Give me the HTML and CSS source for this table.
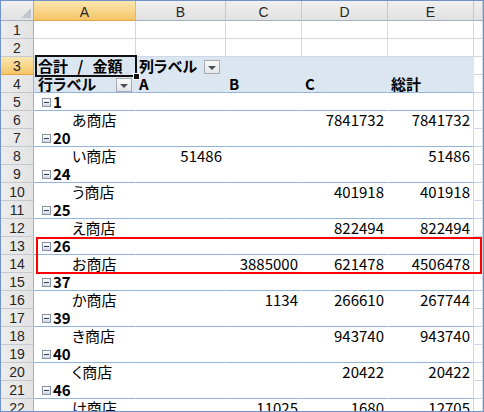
FILE: index.html
```html
<!DOCTYPE html>
<html lang="ja">
<head>
<meta charset="utf-8">
<title>ピボットテーブル</title>
<link rel="stylesheet" href="styles.css">
</head>
<body>
<div class="sheet">
  <div class="row head">
    <div class="ch corner"><span class="tri"></span></div>
    <div class="ch sel">A</div>
    <div class="ch">B</div>
    <div class="ch">C</div>
    <div class="ch">D</div>
    <div class="ch">E</div>
    <div class="ch"></div>
  </div>
  <div class="row"><div class="rh">1</div><div class="c"></div><div class="c"></div><div class="c"></div><div class="c"></div><div class="c"></div><div class="c"></div></div>
  <div class="row"><div class="rh">2</div><div class="c"></div><div class="c"></div><div class="c"></div><div class="c"></div><div class="c"></div><div class="c"></div></div>
  <div class="row">
    <div class="rh sel">3</div>
    <div class="c ph first"><span class="sum">合計 / 金額</span></div>
    <div class="c ph split"><span>列ラベル</span><span class="dd b3"></span></div>
    <div class="c ph"></div><div class="c ph"></div><div class="c ph"></div>
    <div class="c"></div>
  </div>
  <div class="row">
    <div class="rh">4</div>
    <div class="c ph line first split"><span>行ラベル</span><span class="dd a4"></span></div>
    <div class="c ph line">A</div>
    <div class="c ph line">B</div>
    <div class="c ph line">C</div>
    <div class="c ph line">総計</div>
    <div class="c"></div>
  </div>

  <div class="row"><div class="rh">5</div><div class="c pb line grp"><span class="tog"></span>1</div><div class="c pb line"></div><div class="c pb line"></div><div class="c pb line"></div><div class="c pb line last"></div><div class="c"></div></div>
  <div class="row"><div class="rh">6</div><div class="c pb item">あ商店</div><div class="c pb num"></div><div class="c pb num"></div><div class="c pb num">7841732</div><div class="c pb num last">7841732</div><div class="c"></div></div>

  <div class="row"><div class="rh">7</div><div class="c pb line grp"><span class="tog"></span>20</div><div class="c pb line"></div><div class="c pb line"></div><div class="c pb line"></div><div class="c pb line last"></div><div class="c"></div></div>
  <div class="row"><div class="rh">8</div><div class="c pb item">い商店</div><div class="c pb num">51486</div><div class="c pb num"></div><div class="c pb num"></div><div class="c pb num last">51486</div><div class="c"></div></div>

  <div class="row"><div class="rh">9</div><div class="c pb line grp"><span class="tog"></span>24</div><div class="c pb line"></div><div class="c pb line"></div><div class="c pb line"></div><div class="c pb line last"></div><div class="c"></div></div>
  <div class="row"><div class="rh">10</div><div class="c pb item">う商店</div><div class="c pb num"></div><div class="c pb num"></div><div class="c pb num">401918</div><div class="c pb num last">401918</div><div class="c"></div></div>

  <div class="row"><div class="rh">11</div><div class="c pb line grp"><span class="tog"></span>25</div><div class="c pb line"></div><div class="c pb line"></div><div class="c pb line"></div><div class="c pb line last"></div><div class="c"></div></div>
  <div class="row"><div class="rh">12</div><div class="c pb item">え商店</div><div class="c pb num"></div><div class="c pb num"></div><div class="c pb num">822494</div><div class="c pb num last">822494</div><div class="c"></div></div>

  <div class="row"><div class="rh">13</div><div class="c pb line grp"><span class="tog"></span>26</div><div class="c pb line"></div><div class="c pb line"></div><div class="c pb line"></div><div class="c pb line last"></div><div class="c"></div></div>
  <div class="row"><div class="rh">14</div><div class="c pb item">お商店</div><div class="c pb num"></div><div class="c pb num">3885000</div><div class="c pb num">621478</div><div class="c pb num last">4506478</div><div class="c"></div></div>

  <div class="row"><div class="rh">15</div><div class="c pb line grp"><span class="tog"></span>37</div><div class="c pb line"></div><div class="c pb line"></div><div class="c pb line"></div><div class="c pb line last"></div><div class="c"></div></div>
  <div class="row"><div class="rh">16</div><div class="c pb item">か商店</div><div class="c pb num"></div><div class="c pb num">1134</div><div class="c pb num">266610</div><div class="c pb num last">267744</div><div class="c"></div></div>

  <div class="row"><div class="rh">17</div><div class="c pb line grp"><span class="tog"></span>39</div><div class="c pb line"></div><div class="c pb line"></div><div class="c pb line"></div><div class="c pb line last"></div><div class="c"></div></div>
  <div class="row"><div class="rh">18</div><div class="c pb item">き商店</div><div class="c pb num"></div><div class="c pb num"></div><div class="c pb num">943740</div><div class="c pb num last">943740</div><div class="c"></div></div>

  <div class="row"><div class="rh">19</div><div class="c pb line grp"><span class="tog"></span>40</div><div class="c pb line"></div><div class="c pb line"></div><div class="c pb line"></div><div class="c pb line last"></div><div class="c"></div></div>
  <div class="row"><div class="rh">20</div><div class="c pb item">く商店</div><div class="c pb num"></div><div class="c pb num"></div><div class="c pb num">20422</div><div class="c pb num last">20422</div><div class="c"></div></div>

  <div class="row"><div class="rh">21</div><div class="c pb line grp"><span class="tog"></span>46</div><div class="c pb line"></div><div class="c pb line"></div><div class="c pb line"></div><div class="c pb line last"></div><div class="c"></div></div>
  <div class="row"><div class="rh">22</div><div class="c pb item">け商店</div><div class="c pb num"></div><div class="c pb num">11025</div><div class="c pb num">1680</div><div class="c pb num last">12705</div><div class="c"></div></div>

  <div class="active"><span class="handle"></span></div>
  <div class="redbox"></div>
</div>
</body>
</html>
```

FILE: styles.css
```css
* { box-sizing: border-box; }

html, body {
  margin: 0;
  padding: 0;
}

body {
  width: 484px;
  height: 412px;
  overflow: hidden;
  background: #ffffff;
  font-family: "Noto Sans CJK JP", "Noto Sans", sans-serif;
  color: #000000;
}

.sheet {
  position: relative;
  width: 484px;
  height: 412px;
  border: 1px solid #6f92c8;
  overflow: hidden;
  background: #ffffff;
}

.row {
  display: grid;
  grid-template-columns: 33px 102px 90px 76px 86px 86px 9px;
  height: 18px;
}

.row.head {
  height: 20px;
}

/* column headers */
.ch {
  background: linear-gradient(#f0f0f0, #e1e1e1);
  border-right: 1px solid #c5cad2;
  border-bottom: 1px solid #a3b0c2;
  font-family: "Liberation Sans", Arial, sans-serif;
  font-size: 14px;
  line-height: 15px;
  padding-top: 4px;
  color: #262626;
  text-align: center;
}

.ch.sel {
  background: linear-gradient(#fbe6b0, #f5c566);
  border-bottom-color: #e2a548;
  border-right-color: #e5b76d;
}

.corner {
  display: flex;
  justify-content: flex-end;
  align-items: flex-end;
  padding: 0 2px 2px 0;
  border-right-color: #a3b0c2;
}

.tri {
  width: 0;
  height: 0;
  border-left: 10px solid transparent;
  border-bottom: 10px solid #c2c6cc;
}

/* row headers */
.rh {
  background: linear-gradient(90deg, #ececec, #e3e3e3);
  border-right: 1px solid #a3b0c2;
  border-bottom: 1px solid #c5cad2;
  font-family: "Liberation Sans", Arial, sans-serif;
  font-size: 14px;
  line-height: 15px;
  padding-top: 2px;
  color: #262626;
  text-align: center;
  overflow: hidden;
}

.rh.sel {
  background: linear-gradient(#fbe6b0, #f5c566);
  border-bottom-color: #e2a548;
}

/* cells */
.c {
  border-right: 1px solid #d0d7e5;
  border-bottom: 1px solid #d0d7e5;
  font-size: 15px;
  line-height: 17px;
  white-space: nowrap;
  padding: 0 3px;
  font-feature-settings: "palt";
  overflow: visible;
}

.ph {
  background: #dce6f1;
  border-right-color: #dce6f1;
  border-bottom-color: #dce6f1;
  font-weight: bold;
}

.ph.first {
  padding-left: 4px;
}

.ph.line {
  border-bottom-color: #95b3d7;
}

.split {
  display: flex;
  justify-content: space-between;
  align-items: flex-end;
}

.sum {
  word-spacing: 6px;
}

.dd {
  width: 16px;
  height: 14px;
  border: 1px solid #a8adb5;
  background: linear-gradient(#fbfbfb, #e2e4e8);
  display: flex;
  align-items: center;
  justify-content: center;
}

.dd::before {
  content: "";
  width: 0;
  height: 0;
  border-left: 4px solid transparent;
  border-right: 4px solid transparent;
  border-top: 4px solid #4a4f57;
  margin-top: 1px;
}

.dd.b3 {
  margin-right: 2px;
}

.dd.a4 {
  margin-right: 0;
}

.pb {
  background: #ffffff;
  border-right-color: #ffffff;
  border-bottom-color: #ffffff;
}

.pb.line {
  border-bottom-color: #95b3d7;
}

.pb.last {
  border-right-color: #d0d7e5;
}

.grp {
  display: flex;
  align-items: center;
  gap: 2px;
  padding-left: 8px;
  font-weight: bold;
}

.tog {
  width: 9px;
  height: 9px;
  margin-top: 2px;
  border: 1px solid #8591a5;
  background: linear-gradient(#ffffff, #d6dbe3);
  display: flex;
  align-items: center;
  justify-content: center;
}

.tog::before {
  content: "";
  width: 5px;
  height: 1px;
  background: #2f3f5a;
}

.item {
  padding-left: 38px;
}

.num {
  text-align: right;
  padding-right: 3px;
}

/* overlays */
.active {
  position: absolute;
  left: 34px;
  top: 54px;
  width: 102px;
  height: 22px;
  border: 2px solid #111111;
}

.handle {
  position: absolute;
  right: -5px;
  bottom: -5px;
  width: 7px;
  height: 7px;
  background: #111111;
  border: 1px solid #ffffff;
}

.redbox {
  position: absolute;
  left: 35px;
  top: 236px;
  width: 446px;
  height: 37px;
  border: 2px solid #ff0000;
}
```
